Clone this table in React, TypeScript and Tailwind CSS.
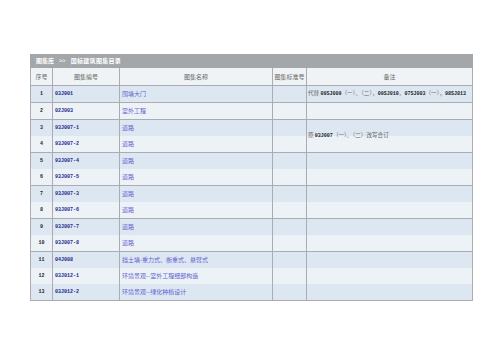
import React from "react";

type Row = { n: number; code: string; name: string };

const rows: Row[] = [
  { n: 1, code: "03J001", name: "围墙大门" },
  { n: 2, code: "02J003", name: "室外工程" },
  { n: 3, code: "93J007-1", name: "道路" },
  { n: 4, code: "93J007-2", name: "道路" },
  { n: 5, code: "93J007-4", name: "道路" },
  { n: 6, code: "93J007-5", name: "道路" },
  { n: 7, code: "93J007-3", name: "道路" },
  { n: 8, code: "93J007-6", name: "道路" },
  { n: 9, code: "93J007-7", name: "道路" },
  { n: 10, code: "93J007-8", name: "道路" },
  { n: 11, code: "04J008", name: "挡土墙-重力式、衡重式、悬臂式" },
  { n: 12, code: "03J012-1", name: "环境景观--室外工程细部构造" },
  { n: 13, code: "03J012-2", name: "环境景观--绿化种植设计" },
];

const blocks: number[][] = [[0], [1], [2, 3], [4, 5], [6, 7], [8, 9], [10, 11, 12]];

const cjk = { fontFamily: '"Noto Sans CJK SC", "Noto Sans", sans-serif' };
const mono = { fontFamily: '"Liberation Mono", "DejaVu Sans Mono", monospace' };

const stripe = (i: number) => (i % 2 === 0 ? "bg-[#dde7f1]" : "bg-[#edf2f7]");

function Code({ children }: { children: React.ReactNode }) {
  return (
    <span className="font-bold text-[5px] text-[#222]" style={mono}>
      {children}
    </span>
  );
}

function Remark1() {
  return (
    <span className="text-[5.6px] leading-none text-[#666] whitespace-nowrap" style={cjk}>
      代替 <Code>09SJ009</Code>（一）、（二），<Code>09SJ010</Code>，<Code>07SJ003</Code>（一），<Code>98SJ813</Code>
    </span>
  );
}

function Remark2() {
  return (
    <span className="text-[5.6px] leading-none text-[#666] whitespace-nowrap" style={cjk}>
      原 <Code>93J007</Code>（一）、（二）改写合订
    </span>
  );
}

export default function App() {
  return (
    <div className="w-[503px] h-[356px] bg-white pt-[54px] pl-[30px]">
      <div className="w-[443px]">
        <div
          className="h-[14px] bg-[#a4a7aa] flex items-center pl-[6px] text-white font-bold text-[6px] leading-none gap-[5px]"
          style={cjk}
        >
          <span>图集库</span>
          <span className="font-normal">&gt;&gt;</span>
          <span className="tracking-[0.3px]">国标建筑图集目录</span>
        </div>
        <div className="border-l border-r border-b border-[#a9adb1]">
          <div
            className="flex h-[18px] bg-[#eff3f6] border-b border-[#a9adb1] text-[6px] leading-none text-[#666]"
            style={cjk}
          >
            <div className="w-[22px] border-r border-[#a9adb1] flex items-center justify-center">序号</div>
            <div className="w-[67px] border-r border-[#a9adb1] flex items-center justify-center">图集编号</div>
            <div className="w-[153px] border-r border-[#a9adb1] flex items-center justify-center">图集名称</div>
            <div className="w-[34px] border-r border-[#a9adb1] flex items-center justify-center">图集标准号</div>
            <div className="w-[165px] flex items-center justify-center">备注</div>
          </div>
          {blocks.map((b, bi) => (
            <div
              key={bi}
              className={bi < blocks.length - 1 ? "flex border-b border-[#a9adb1]" : "flex"}
            >
              <div className="w-[22px] border-r border-[#a9adb1] flex flex-col">
                {b.map((i) => (
                  <div
                    key={i}
                    className={`h-[16px] flex items-center justify-center font-bold text-[5px] leading-none text-[#222] ${stripe(i)}`}
                    style={mono}
                  >
                    {rows[i].n}
                  </div>
                ))}
              </div>
              <div className="w-[67px] border-r border-[#a9adb1] flex flex-col">
                {b.map((i) => (
                  <div
                    key={i}
                    className={`h-[16px] flex items-center pl-[2px] font-bold text-[5px] leading-none text-[#23238c] ${stripe(i)}`}
                    style={mono}
                  >
                    {rows[i].code}
                  </div>
                ))}
              </div>
              <div className="w-[153px] border-r border-[#a9adb1] flex flex-col">
                {b.map((i) => (
                  <div
                    key={i}
                    className={`h-[16px] flex items-center pl-[2px] pb-[1px] text-[6px] leading-none text-[#6262d2] ${stripe(i)}`}
                    style={cjk}
                  >
                    {rows[i].name}
                  </div>
                ))}
              </div>
              <div className="w-[34px] border-r border-[#a9adb1] flex flex-col">
                {b.map((i) => (
                  <div key={i} className={`h-[16px] ${stripe(i)}`} />
                ))}
              </div>
              <div className="w-[165px] flex flex-col">
                {bi === 0 ? (
                  <div className={`h-[16px] flex items-center pl-[1px] ${stripe(0)}`}>
                    <Remark1 />
                  </div>
                ) : bi === 2 ? (
                  <div className="h-[32px] flex items-center pl-[1px] bg-[linear-gradient(to_bottom,#dde7f1_50%,#edf2f7_50%)]">
                    <Remark2 />
                  </div>
                ) : (
                  b.map((i) => <div key={i} className={`h-[16px] ${stripe(i)}`} />)
                )}
              </div>
            </div>
          ))}
        </div>
      </div>
    </div>
  );
}
